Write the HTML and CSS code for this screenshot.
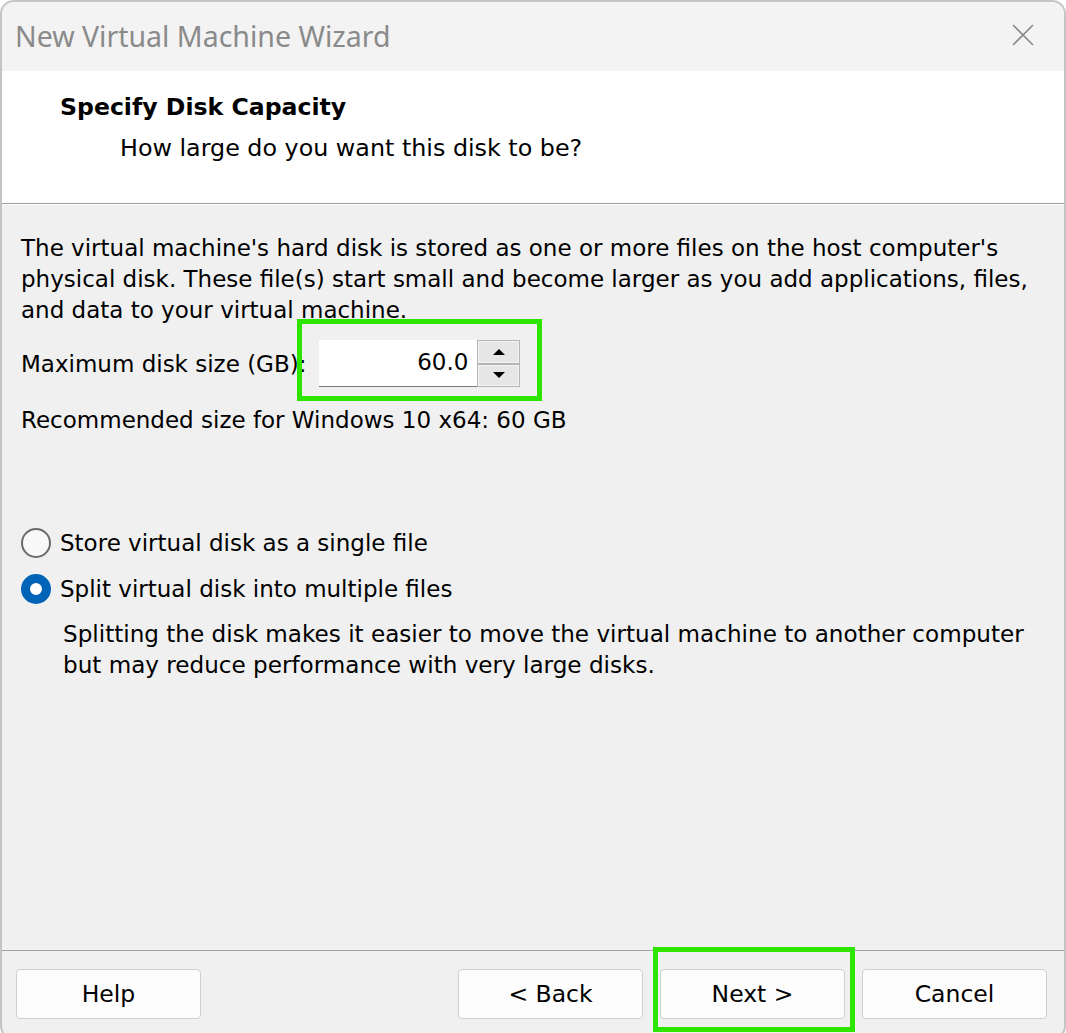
FILE: index.html
```html
<!DOCTYPE html>
<html>
<head>
<meta charset="utf-8">
<title>New Virtual Machine Wizard</title>
<link rel="stylesheet" href="styles.css">
</head>
<body>
<div class="window">
  <div class="titlebar">
    <span class="title">New Virtual Machine Wizard</span>
    <svg class="close" width="22" height="22" viewBox="0 0 22 22"><path d="M1 1 L21 21 M21 1 L1 21" stroke="#8a8a8a" stroke-width="1.6" fill="none"/></svg>
  </div>
  <div class="header">
    <div class="h-title">Specify Disk Capacity</div>
    <div class="h-sub">How large do you want this disk to be?</div>
  </div>
  <div class="content">
    <p class="intro">The virtual machine's hard disk is stored as one or more files on the host computer's physical disk. These file(s) start small and become larger as you add applications, files, and data to your virtual machine.</p>
    <div class="size-row">
      <span class="label">Maximum disk size (GB):</span>
      <div class="spin">
        <div class="spin-value">60.0</div>
        <div class="spin-btns">
          <div class="spin-btn"><span class="arrow up"></span></div>
          <div class="spin-btn"><span class="arrow down"></span></div>
        </div>
        <div class="highlight spin-hl"></div>
      </div>
    </div>
    <p class="rec">Recommended size for Windows 10 x64: 60 GB</p>
    <div class="radios">
      <div class="radio-row"><span class="radio"></span><span>Store virtual disk as a single file</span></div>
      <div class="radio-row"><span class="radio checked"></span><span>Split virtual disk into multiple files</span></div>
      <p class="radio-desc">Splitting the disk makes it easier to move the virtual machine to another computer but may reduce performance with very large disks.</p>
    </div>
  </div>
  <div class="footer">
    <div class="btn">Help</div>
    <div class="spacer"></div>
    <div class="btn">&lt; Back</div>
    <div class="btn next">Next &gt;<div class="highlight next-hl"></div></div>
    <div class="btn">Cancel</div>
  </div>
</div>
</body>
</html>
```
FILE: styles.css
```css
html, body {
  margin: 0;
  padding: 0;
  overflow: hidden;
  background: #ffffff;
}
body {
  width: 1066px;
  height: 1033px;
  font-family: "DejaVu Sans", sans-serif;
  font-size: 23px;
  color: #000;
}
.window {
  box-sizing: border-box;
  width: 1066px;
  height: 1040px;
  border: 2px solid #c4c4c4;
  border-radius: 14px;
  overflow: hidden;
  background: #f0f0f0;
  display: flex;
  flex-direction: column;
}
.titlebar {
  height: 69px;
  background: #f3f3f3;
  display: flex;
  align-items: center;
  justify-content: space-between;
  padding: 0 30px 0 13px;
  flex-shrink: 0;
}
.title {
  font-family: "Noto Sans", "Open Sans", sans-serif;
  font-size: 28.5px;
  color: #8a8a8a;
  margin-top: -1px;
}
.close { display: block; margin-top: -4px; }
.header {
  height: 133px;
  background: #ffffff;
  border-bottom: 1px solid #a0a0a0;
  box-shadow: 0 1px 0 #ffffff;
  box-sizing: border-box;
  padding: 20px 0 0 58px;
  flex-shrink: 0;
}
.h-title {
  font-weight: bold;
  font-size: 23.6px;
  line-height: 32px;
}
.h-sub {
  font-size: 23.8px;
  line-height: 32px;
  margin: 9px 0 0 60px;
}
.content {
  flex: 1;
  padding: 29px 19px 0 19px;
}
.intro {
  margin: 0;
  line-height: 31px;
}
.size-row {
  display: flex;
  align-items: center;
  margin-top: 14px;
  height: 47px;
}
.label { margin-right: 13px; }
.spin {
  position: relative;
  display: flex;
  height: 47px;
}
.spin-value {
  width: 158px;
  box-sizing: border-box;
  background: #fff;
  border-bottom: 1px solid #7a7a7a;
  text-align: right;
  padding-right: 9px;
  line-height: 45px;
}
.spin-btns {
  display: flex;
  flex-direction: column;
  width: 43px;
}
.spin-btn {
  flex: 1;
  box-sizing: border-box;
  border: 1px solid #b4b4b4;
  box-shadow: inset 0 0 0 1px #f4f4f4;
  background: #e6e6e6;
  display: flex;
  align-items: center;
  justify-content: center;
}
.arrow {
  width: 0;
  height: 0;
  border-left: 6px solid transparent;
  border-right: 6px solid transparent;
}
.arrow.up { border-bottom: 6px solid #000; }
.arrow.down { border-top: 6px solid #000; }
.highlight {
  position: absolute;
  border: 5px solid #2ee500;
  box-sizing: border-box;
  pointer-events: none;
}
.spin-hl {
  left: -22px;
  top: -21px;
  width: 245px;
  height: 82px;
}
.rec {
  margin: 18px 0 0 0;
  line-height: 31px;
}
.radios { margin-top: 84px; }
.radio-row {
  display: flex;
  align-items: center;
  height: 46px;
}
.radio {
  width: 30px;
  height: 30px;
  box-sizing: border-box;
  border: 2px solid #6a6a6a;
  border-radius: 50%;
  background: #f8f8f8;
  margin: 0 9px 0 0;
  flex-shrink: 0;
}
.radio.checked {
  border: 9.5px solid #0063b8;
  background: #fff;
}
.radio-desc {
  font-size: 23.1px;
  margin: 7px 0 0 42px;
  line-height: 31px;
}
.footer {
  flex-shrink: 0;
  height: 88px;
  border-top: 1px solid #a0a0a0;
  box-sizing: border-box;
  display: flex;
  align-items: flex-start;
  padding: 18px 17px 0 14px;
  gap: 17px;
}
.spacer { flex: 1; }
.btn {
  position: relative;
  width: 185px;
  height: 50px;
  box-sizing: border-box;
  background: #fdfdfd;
  border: 1px solid #cfcfcf;
  border-radius: 4px;
  display: flex;
  align-items: center;
  justify-content: center;
  font-size: 23.5px;
}
.next-hl {
  left: -8px;
  top: -23px;
  width: 202px;
  height: 85px;
}
```
